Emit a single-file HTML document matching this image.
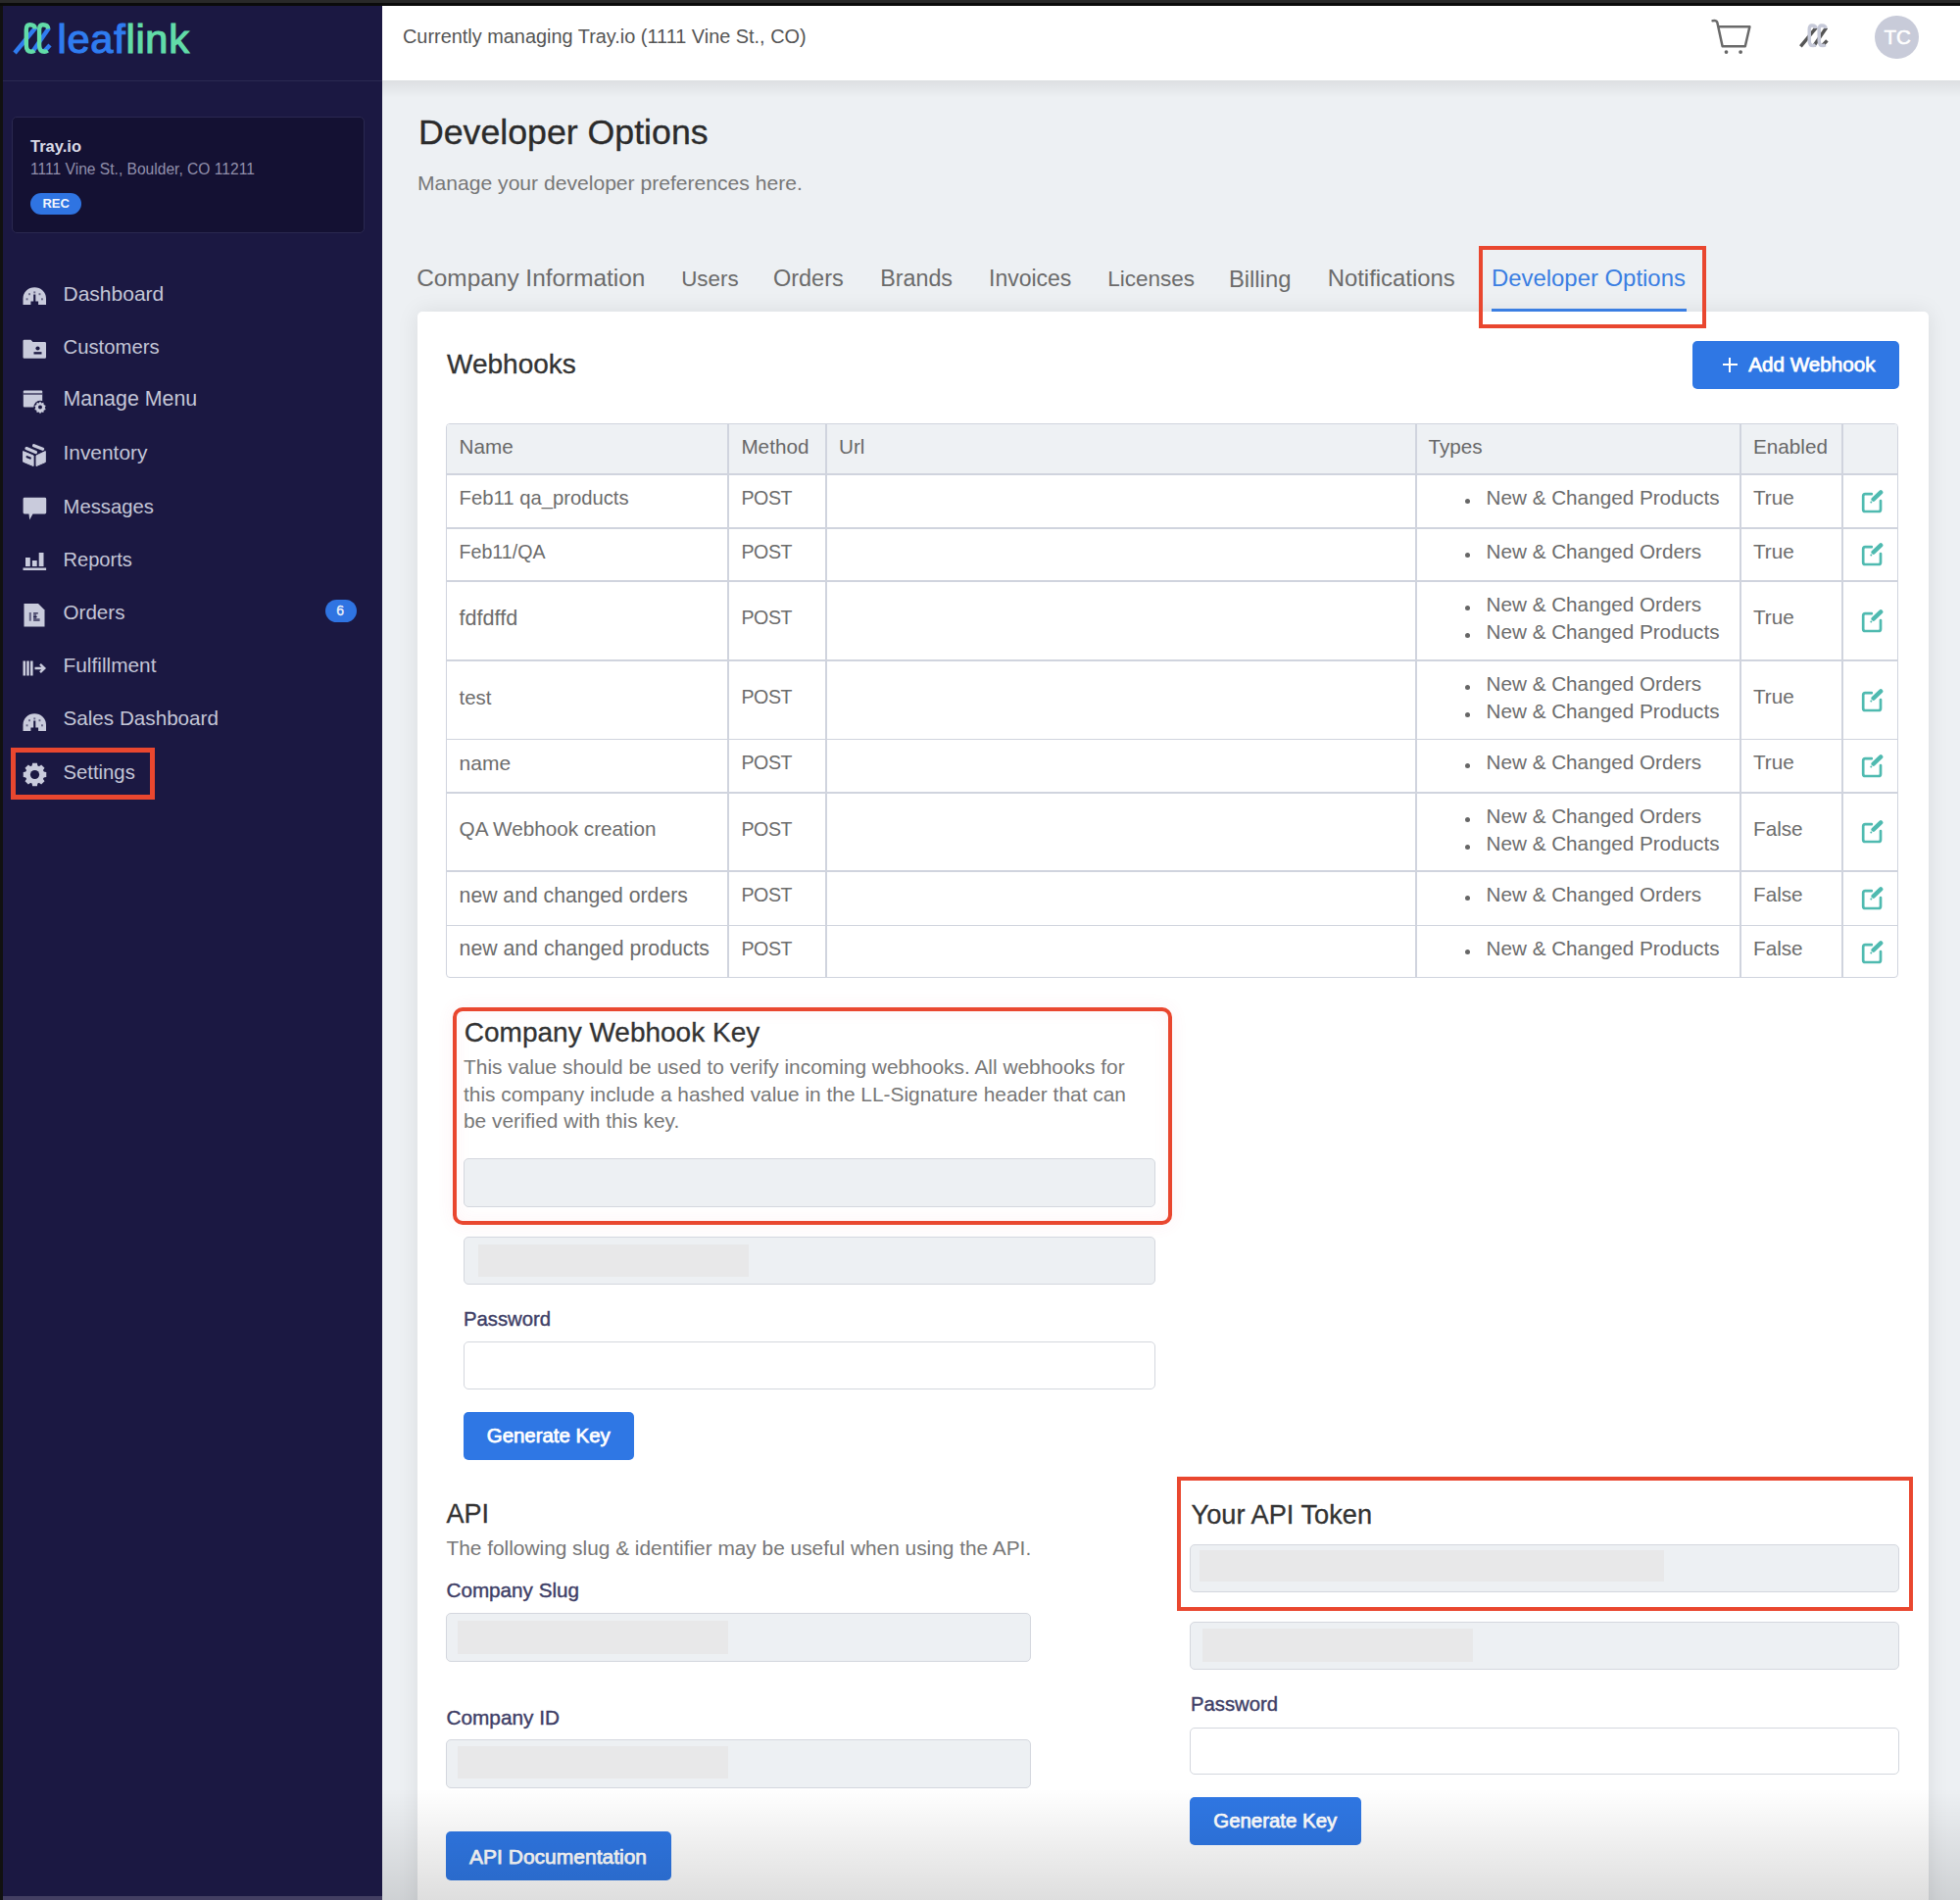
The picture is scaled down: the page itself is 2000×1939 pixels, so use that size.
<!DOCTYPE html>
<html><head><meta charset="utf-8"><style>
html,body{margin:0;padding:0}
body{width:2000px;height:1939px;position:relative;overflow:hidden;background:#edf0f3;font-family:"Liberation Sans", sans-serif}
.t{position:absolute;white-space:pre}
</style></head><body>
<div style="position:absolute;left:0px;top:0px;width:2000px;height:3px;background:#292929"></div>
<div style="position:absolute;left:0px;top:3px;width:2000px;height:3px;background:#0b0b0b"></div>
<div style="position:absolute;left:0px;top:6px;width:3px;height:1933px;background:#111"></div>
<div style="position:absolute;left:3px;top:6px;width:387px;height:1933px;background:#1b1842"></div>
<div style="position:absolute;left:3px;top:82px;width:387px;height:1px;background:#2b2952"></div>
<svg style="position:absolute;left:0;top:0" width="60" height="70" viewBox="0 0 60 70">
<g fill="none" stroke-width="4.4" stroke-linecap="butt">
<path d="M15 54 L36.5 28" stroke="#2f7cf0"/>
<path d="M33 53 L50 28.5" stroke="#2f7cf0"/>
<path d="M44.5 53 L51 46" stroke="#2f7cf0"/>
<path d="M36 29.5 C35.5 25.5 32.5 25.3 30.5 25.3 C28 25.3 26.8 27 26.8 30.5 L26.8 46 C26.8 51 29 52.8 32 52.8 C33.5 52.8 34.5 52.3 35.3 51.6" stroke="#62dca8"/>
<path d="M49.3 29.5 C48.8 25.5 45.8 25.3 43.8 25.3 C41.3 25.3 40.1 27 40.1 30.5 L40.1 46 C40.1 51 42.3 52.8 45.3 52.8 C46.8 52.8 47.8 52.3 48.6 51.6" stroke="#62dca8"/>
</g></svg>
<div class="t" style="left:58.50px;top:19.37px;font-size:41.5px;line-height:41.5px;color:#666;font-weight:400;letter-spacing:0.75px"><span style="color:#2f7cf0;-webkit-text-stroke:1.2px #2f7cf0">leaf</span><span style="color:#62dca8;-webkit-text-stroke:1.2px #62dca8">link</span></div>
<div style="position:absolute;left:12px;top:119px;width:360px;height:119px;background:#141133;border:1px solid #2a2850;border-radius:5px;box-sizing:border-box"></div>
<div class="t" style="left:31.00px;top:141.03px;font-size:16.5px;line-height:16.5px;color:#dadae6;font-weight:700;">Tray.io</div>
<div class="t" style="left:31.00px;top:165.29px;font-size:15.6px;line-height:15.6px;color:#918fab;font-weight:400;">1111 Vine St., Boulder, CO 11211</div>
<div style="position:absolute;left:31px;top:196.5px;width:52px;height:22.5px;background:#2f74e2;border-radius:12px"></div>
<div class="t" style="left:43.40px;top:200.70px;font-size:13px;line-height:13px;color:#f4f6fc;font-weight:700;">REC</div>
<div class="t" style="left:64.50px;top:288.92px;font-size:21.0px;line-height:21.0px;color:#c4c6d7;font-weight:400;">Dashboard</div>
<div class="t" style="left:64.50px;top:343.77px;font-size:20.3px;line-height:20.3px;color:#c4c6d7;font-weight:400;">Customers</div>
<div class="t" style="left:64.50px;top:397.08px;font-size:21.4px;line-height:21.4px;color:#c4c6d7;font-weight:400;">Manage Menu</div>
<div class="t" style="left:64.50px;top:451.76px;font-size:20.9px;line-height:20.9px;color:#c4c6d7;font-weight:400;">Inventory</div>
<div class="t" style="left:64.50px;top:506.52px;font-size:20.3px;line-height:20.3px;color:#c4c6d7;font-weight:400;">Messages</div>
<div class="t" style="left:64.50px;top:560.94px;font-size:20.1px;line-height:20.1px;color:#c4c6d7;font-weight:400;">Reports</div>
<div class="t" style="left:64.50px;top:614.76px;font-size:20.6px;line-height:20.6px;color:#c4c6d7;font-weight:400;">Orders</div>
<div class="t" style="left:64.50px;top:668.80px;font-size:20.85px;line-height:20.85px;color:#c4c6d7;font-weight:400;">Fulfillment</div>
<div class="t" style="left:64.50px;top:723.21px;font-size:20.66px;line-height:20.66px;color:#c4c6d7;font-weight:400;">Sales Dashboard</div>
<div class="t" style="left:64.50px;top:777.77px;font-size:20.3px;line-height:20.3px;color:#c4c6d7;font-weight:400;">Settings</div>
<div style="position:absolute;left:331.6px;top:611.8px;width:32.099999999999966px;height:23.5px;background:#2f74e2;border-radius:12px"></div>
<div class="t" style="left:343.20px;top:616.15px;font-size:14px;line-height:14px;color:#eef2fb;font-weight:400;-webkit-text-stroke:0.3px #eef2fb">6</div>
<div style="position:absolute;left:11px;top:762.5px;width:147px;height:53.5px;border:5px solid #e9472f;box-sizing:border-box"></div>
<svg style="position:absolute;left:23px;top:292px" width="25" height="20" viewBox="0 0 25 20"><path d="M0.5 19 V12.6 A11.75 11.3 0 0 1 24 12.6 V19 Z" fill="#c9cbdc"/>
<path d="M8.4 19.2 V15.6 H11.2 V8.6 H13.3 V15.6 H16.1 V19.2 Z" fill="#1b1842"/>
<g fill="#1b1842" opacity="0.55"><rect x="11.3" y="5.4" width="1.9" height="2"/><rect x="6.1" y="7.2" width="1.9" height="2"/><rect x="16.5" y="7.2" width="1.9" height="2"/><rect x="3.6" y="12.3" width="1.9" height="2"/><rect x="19" y="12.3" width="1.9" height="2"/></g></svg>
<svg style="position:absolute;left:23px;top:726.5px" width="25" height="20" viewBox="0 0 25 20"><path d="M0.5 19 V12.6 A11.75 11.3 0 0 1 24 12.6 V19 Z" fill="#c9cbdc"/>
<path d="M8.4 19.2 V15.6 H11.2 V8.6 H13.3 V15.6 H16.1 V19.2 Z" fill="#1b1842"/>
<g fill="#1b1842" opacity="0.55"><rect x="11.3" y="5.4" width="1.9" height="2"/><rect x="6.1" y="7.2" width="1.9" height="2"/><rect x="16.5" y="7.2" width="1.9" height="2"/><rect x="3.6" y="12.3" width="1.9" height="2"/><rect x="19" y="12.3" width="1.9" height="2"/></g></svg>
<svg style="position:absolute;left:23px;top:345px" width="25" height="22" viewBox="0 0 25 22"><path d="M0.5 3 Q0.5 1.8 1.7 1.8 H8.5 L10.5 4 H22.8 Q24 4 24 5.2 V19.6 Q24 20.8 22.8 20.8 H1.7 Q0.5 20.8 0.5 19.6 Z" fill="#c9cbdc"/>
<circle cx="15.5" cy="10.5" r="2.1" fill="#1b1842"/><rect x="11.5" y="14.2" width="8" height="2.3" fill="#1b1842"/></svg>
<svg style="position:absolute;left:23px;top:397px" width="26" height="26" viewBox="0 0 26 26"><rect x="0.8" y="1.6" width="19.4" height="17" rx="1" fill="#c9cbdc"/>
<rect x="0.8" y="4.4" width="19.4" height="1.2" fill="#1b1842"/>
<circle cx="18" cy="18.3" r="6.6" fill="#1b1842"/>
<path transform="translate(-1,-1.2)" d="M19 13.8 l1.3 1.8 2.1-.6 .3 2.2 2 .9 -1 2 1 2 -2 .9 -.3 2.2 -2.1-.6 -1.3 1.8 -1.3-1.8 -2.1.6 -.3-2.2 -2-.9 1-2 -1-2 2-.9 .3-2.2 2.1.6 Z" fill="#c9cbdc"/>
<circle cx="18" cy="18.5" r="2" fill="#1b1842"/></svg>
<svg style="position:absolute;left:18px;top:445px" width="34" height="35" viewBox="0 0 34 35"><path d="M5.6 15.6 L16.1 20 V30.6 L5.6 26.2 Z" fill="#c9cbdc" stroke="#c9cbdc" stroke-width="1" stroke-linejoin="round"/>
<path d="M19 20 L28.3 15.6 V26.6 L19 30.6 Z" fill="#c9cbdc" stroke="#c9cbdc" stroke-width="1" stroke-linejoin="round"/>
<path d="M9 12.6 L18.4 16.6 M16.6 9.8 L25.6 13.2" stroke="#c9cbdc" stroke-width="3.3" stroke-linecap="round" fill="none"/>
<path d="M9.6 21.2 L12.8 22.6" stroke="#1b1842" stroke-width="2.2" stroke-linecap="round" fill="none"/></svg>
<svg style="position:absolute;left:23px;top:507px" width="26" height="25" viewBox="0 0 26 25"><path d="M2 0.8 H22.8 Q24.2 0.8 24.2 2.2 V16 Q24.2 17.4 22.8 17.4 H10.5 L7.2 23.5 L6.5 17.4 H2 Q0.6 17.4 0.6 16 V2.2 Q0.6 0.8 2 0.8 Z" fill="#c9cbdc"/></svg>
<svg style="position:absolute;left:23px;top:563px" width="26" height="20" viewBox="0 0 26 20"><rect x="3" y="6" width="4.8" height="9" fill="#c9cbdc"/><rect x="9.9" y="9" width="4.8" height="6" fill="#c9cbdc"/><rect x="16.7" y="1" width="4.8" height="14" fill="#c9cbdc"/><rect x="0.5" y="16.5" width="23.6" height="2.5" fill="#c9cbdc"/></svg>
<svg style="position:absolute;left:23px;top:615px" width="25" height="26" viewBox="0 0 25 26"><path d="M1.5 1 H16 L22.5 7.5 V24.5 H1.5 Z" fill="#c9cbdc"/>
<rect x="6.8" y="10" width="2" height="8.7" fill="#1b1842" opacity="0.6"/><rect x="11.1" y="10" width="4.7" height="1.6" fill="#1b1842" opacity="0.75"/><rect x="11.1" y="11.6" width="3" height="5" fill="#1b1842" opacity="0.6"/><rect x="11.1" y="13.9" width="3.6" height="1.2" fill="#1b1842" opacity="0.9"/><rect x="11.1" y="16.2" width="6.5" height="2.8" fill="#1b1842" opacity="0.65"/></svg>
<svg style="position:absolute;left:23px;top:674px" width="26" height="17" viewBox="0 0 26 17"><rect x="0.5" y="0.5" width="2.6" height="15" fill="#c9cbdc"/><rect x="4.2" y="0.5" width="2.6" height="15" fill="#c9cbdc"/><rect x="8" y="0.5" width="2.6" height="15" fill="#c9cbdc"/>
<path d="M12.5 8 H22 M18 3.8 L22.3 8 L18 12.2" stroke="#c9cbdc" stroke-width="2.4" fill="none"/></svg>
<svg style="position:absolute;left:22px;top:777px" width="27" height="27" viewBox="0 0 27 27"><path d="M10.57 4.67 L11.12 1.74 L15.88 1.74 L16.43 4.67 L17.67 5.19 L20.13 3.50 L23.50 6.87 L21.81 9.33 L22.33 10.57 L25.26 11.12 L25.26 15.88 L22.33 16.43 L21.81 17.67 L23.50 20.13 L20.13 23.50 L17.67 21.81 L16.43 22.33 L15.88 25.26 L11.12 25.26 L10.57 22.33 L9.33 21.81 L6.87 23.50 L3.50 20.13 L5.19 17.67 L4.67 16.43 L1.74 15.88 L1.74 11.12 L4.67 10.57 L5.19 9.33 L3.50 6.87 L6.87 3.50 L9.33 5.19 Z" fill="#c9cbdc"/>
<circle cx="13.5" cy="13.5" r="9.6" fill="#c9cbdc"/>
<circle cx="13.5" cy="13.5" r="4.6" fill="#1b1842"/></svg>
<div style="position:absolute;left:390px;top:6px;width:1610px;height:76px;background:#fff"></div>
<div style="position:absolute;left:390px;top:82px;width:1610px;height:18px;background:linear-gradient(rgba(0,0,0,0.07),rgba(0,0,0,0))"></div>
<div class="t" style="left:411.00px;top:27.75px;font-size:19.9px;line-height:19.9px;color:#555;font-weight:400;">Currently managing Tray.io (1111 Vine St., CO)</div>
<div style="position:absolute;left:1913px;top:15.5px;width:44.5px;height:44.5px;border-radius:50%;background:#c8cbd9"></div>
<div class="t" style="left:1922.50px;top:27.85px;font-size:20.5px;line-height:20.5px;color:#fff;font-weight:400;-webkit-text-stroke:0.6px #fff">TC</div>
<svg style="position:absolute;left:1740px;top:15px" width="130" height="45" viewBox="1740 15 130 45">
<path d="M1747.6 21.2 Q1751.5 20.5 1752.3 22.8 L1757.6 47.2 H1780.8 L1785.4 27.3 H1753.6" fill="none" stroke="#6a6a6a" stroke-width="2.5" stroke-linejoin="round" stroke-linecap="round"/>
<circle cx="1761.5" cy="53.1" r="1.9" fill="#666"/><circle cx="1776.1" cy="53.1" r="1.9" fill="#666"/>
<g transform="translate(1837,24.2) scale(0.75) translate(-14.5,-23)">
<g fill="none" stroke-width="4.6" stroke-linecap="butt">
<path d="M15 54 L36.5 28" stroke="#555"/>
<path d="M33 53 L50 28.5" stroke="#555"/>
<path d="M44.5 53 L51 46" stroke="#555"/>
<path d="M36 29.5 C35.5 25.5 32.5 25.3 30.5 25.3 C28 25.3 26.8 27 26.8 30.5 L26.8 46 C26.8 51 29 52.8 32 52.8 C33.5 52.8 34.5 52.3 35.3 51.6" stroke="#c6c9d8"/>
<path d="M49.3 29.5 C48.8 25.5 45.8 25.3 43.8 25.3 C41.3 25.3 40.1 27 40.1 30.5 L40.1 46 C40.1 51 42.3 52.8 45.3 52.8 C46.8 52.8 47.8 52.3 48.6 51.6" stroke="#c6c9d8"/>
</g></g>
</svg>
<div class="t" style="left:427.00px;top:118.38px;font-size:35.7px;line-height:35.7px;color:#2b2b2b;font-weight:400;-webkit-text-stroke:0.35px #2b2b2b">Developer Options</div>
<div class="t" style="left:426.00px;top:176.04px;font-size:21.1px;line-height:21.1px;color:#777;font-weight:400;">Manage your developer preferences here.</div>
<div class="t" style="left:425.20px;top:272.05px;font-size:24.4px;line-height:24.4px;color:#6b6b6b;font-weight:400;">Company Information</div>
<div class="t" style="left:695.20px;top:273.74px;font-size:22.4px;line-height:22.4px;color:#6b6b6b;font-weight:400;">Users</div>
<div class="t" style="left:788.90px;top:272.81px;font-size:23.5px;line-height:23.5px;color:#6b6b6b;font-weight:400;">Orders</div>
<div class="t" style="left:898.20px;top:272.98px;font-size:23.3px;line-height:23.3px;color:#6b6b6b;font-weight:400;">Brands</div>
<div class="t" style="left:1009.00px;top:273.23px;font-size:23.0px;line-height:23.0px;color:#6b6b6b;font-weight:400;">Invoices</div>
<div class="t" style="left:1130.20px;top:273.65px;font-size:22.5px;line-height:22.5px;color:#6b6b6b;font-weight:400;">Licenses</div>
<div class="t" style="left:1253.90px;top:272.55px;font-size:23.8px;line-height:23.8px;color:#6b6b6b;font-weight:400;">Billing</div>
<div class="t" style="left:1354.70px;top:272.47px;font-size:23.9px;line-height:23.9px;color:#6b6b6b;font-weight:400;">Notifications</div>
<div style="position:absolute;left:425.5px;top:317.8px;width:1542.3px;height:1700px;background:#fff;border-radius:5px;box-shadow:0 0 22px rgba(0,0,0,0.085)"></div>
<div class="t" style="left:1522.00px;top:272.47px;font-size:23.9px;line-height:23.9px;color:#3a7ee2;font-weight:400;">Developer Options</div>
<div style="position:absolute;left:1522px;top:315px;width:199px;height:3px;background:#3a7ee2"></div>
<div style="position:absolute;left:1509px;top:251px;width:232px;height:84px;border:4px solid #e9472f;box-sizing:border-box"></div>
<div class="t" style="left:456.00px;top:358.30px;font-size:28px;line-height:28px;color:#333;font-weight:400;-webkit-text-stroke:0.3px #333">Webhooks</div>
<div style="position:absolute;left:1727px;top:347.5px;width:211px;height:49.5px;background:#2f77e4;border-radius:5px"></div>
<div style="position:absolute;left:1757.7px;top:371.2px;width:15.0px;height:2.3000000000000114px;background:#fff"></div>
<div style="position:absolute;left:1764px;top:364.5px;width:2.2999999999999545px;height:15.5px;background:#fff"></div>
<div class="t" style="left:1784.20px;top:361.50px;font-size:20.67px;line-height:20.67px;color:#fff;font-weight:400;-webkit-text-stroke:0.75px #fff">Add Webhook</div>
<div style="position:absolute;left:455px;top:432px;width:1482px;height:566px;border:1.6px solid #d0d4de;border-radius:4px;box-sizing:border-box;overflow:hidden"><div style="position:absolute;left:0;top:0;right:0;height:52px;background:#eef1f4"></div></div>
<div style="position:absolute;left:742.4px;top:432px;width:1.2000000000000455px;height:566px;background:#d0d4de"></div>
<div style="position:absolute;left:842.4px;top:432px;width:1.2000000000000455px;height:566px;background:#d0d4de"></div>
<div style="position:absolute;left:1444.4px;top:432px;width:1.199999999999818px;height:566px;background:#d0d4de"></div>
<div style="position:absolute;left:1775.4px;top:432px;width:1.199999999999818px;height:566px;background:#d0d4de"></div>
<div style="position:absolute;left:1879.4px;top:432px;width:1.199999999999818px;height:566px;background:#d0d4de"></div>
<div style="position:absolute;left:455px;top:483.4px;width:1482px;height:1.2000000000000455px;background:#d0d4de"></div>
<div style="position:absolute;left:455px;top:538.4px;width:1482px;height:1.2000000000000455px;background:#d0d4de"></div>
<div style="position:absolute;left:455px;top:592.4px;width:1482px;height:1.2000000000000455px;background:#d0d4de"></div>
<div style="position:absolute;left:455px;top:673.4px;width:1482px;height:1.2000000000000455px;background:#d0d4de"></div>
<div style="position:absolute;left:455px;top:753.9px;width:1482px;height:1.2000000000000455px;background:#d0d4de"></div>
<div style="position:absolute;left:455px;top:808.4px;width:1482px;height:1.2000000000000455px;background:#d0d4de"></div>
<div style="position:absolute;left:455px;top:888.4px;width:1482px;height:1.2000000000000455px;background:#d0d4de"></div>
<div style="position:absolute;left:455px;top:943.9px;width:1482px;height:1.2000000000000455px;background:#d0d4de"></div>
<div class="t" style="left:468.60px;top:446.38px;font-size:20.7px;line-height:20.7px;color:#686868;font-weight:400;">Name</div>
<div class="t" style="left:756.40px;top:446.38px;font-size:20.7px;line-height:20.7px;color:#686868;font-weight:400;">Method</div>
<div class="t" style="left:856.00px;top:446.38px;font-size:20.7px;line-height:20.7px;color:#686868;font-weight:400;">Url</div>
<div class="t" style="left:1457.50px;top:446.38px;font-size:20.7px;line-height:20.7px;color:#686868;font-weight:400;">Types</div>
<div class="t" style="left:1789.00px;top:446.38px;font-size:20.7px;line-height:20.7px;color:#686868;font-weight:400;">Enabled</div>
<div class="t" style="left:468.60px;top:498.36px;font-size:20.25px;line-height:20.25px;color:#6c6c6c;font-weight:400;">Feb11 qa_products</div>
<div class="t" style="left:756.40px;top:498.91px;font-size:19.6px;line-height:19.6px;color:#6c6c6c;font-weight:400;letter-spacing:-0.4px">POST</div>
<div class="t" style="left:1789.00px;top:497.98px;font-size:20.7px;line-height:20.7px;color:#6c6c6c;font-weight:400;">True</div>
<div style="position:absolute;left:1495.2px;top:508.8px;width:5.1px;height:5.1px;border-radius:50%;background:#666"></div>
<div class="t" style="left:1516.50px;top:497.98px;font-size:20.7px;line-height:20.7px;color:#6c6c6c;font-weight:400;">New &amp; Changed Products</div>
<svg style="position:absolute;left:1897.0px;top:499.8px" width="26" height="26" viewBox="-2 -2 26 26">
<path d="M10.8 2.2 H4.2 Q2.2 2.2 2.2 4.2 V18 Q2.2 20 4.2 20 H18 Q20 20 20 18 V9" fill="none" stroke="#4fbab0" stroke-width="2.7" stroke-linecap="round"/>
<path d="M12.6 7.6 L20.2 0.4" fill="none" stroke="#4fbab0" stroke-width="4.4" stroke-linecap="round"/>
<circle cx="10.3" cy="10.6" r="1" fill="#4fbab0"/>
</svg>
<div class="t" style="left:468.60px;top:553.91px;font-size:19.6px;line-height:19.6px;color:#6c6c6c;font-weight:400;">Feb11/QA</div>
<div class="t" style="left:756.40px;top:553.91px;font-size:19.6px;line-height:19.6px;color:#6c6c6c;font-weight:400;letter-spacing:-0.4px">POST</div>
<div class="t" style="left:1789.00px;top:552.98px;font-size:20.7px;line-height:20.7px;color:#6c6c6c;font-weight:400;">True</div>
<div style="position:absolute;left:1495.2px;top:563.8px;width:5.1px;height:5.1px;border-radius:50%;background:#666"></div>
<div class="t" style="left:1516.50px;top:552.98px;font-size:20.7px;line-height:20.7px;color:#6c6c6c;font-weight:400;">New &amp; Changed Orders</div>
<svg style="position:absolute;left:1897.0px;top:554.3px" width="26" height="26" viewBox="-2 -2 26 26">
<path d="M10.8 2.2 H4.2 Q2.2 2.2 2.2 4.2 V18 Q2.2 20 4.2 20 H18 Q20 20 20 18 V9" fill="none" stroke="#4fbab0" stroke-width="2.7" stroke-linecap="round"/>
<path d="M12.6 7.6 L20.2 0.4" fill="none" stroke="#4fbab0" stroke-width="4.4" stroke-linecap="round"/>
<circle cx="10.3" cy="10.6" r="1" fill="#4fbab0"/>
</svg>
<div class="t" style="left:468.60px;top:619.52px;font-size:21.6px;line-height:21.6px;color:#6c6c6c;font-weight:400;">fdfdffd</div>
<div class="t" style="left:756.40px;top:621.21px;font-size:19.6px;line-height:19.6px;color:#6c6c6c;font-weight:400;letter-spacing:-0.4px">POST</div>
<div class="t" style="left:1789.00px;top:620.28px;font-size:20.7px;line-height:20.7px;color:#6c6c6c;font-weight:400;">True</div>
<div style="position:absolute;left:1495.2px;top:617.6px;width:5.1px;height:5.1px;border-radius:50%;background:#666"></div>
<div class="t" style="left:1516.50px;top:606.88px;font-size:20.7px;line-height:20.7px;color:#6c6c6c;font-weight:400;">New &amp; Changed Orders</div>
<div style="position:absolute;left:1495.2px;top:645.8px;width:5.1px;height:5.1px;border-radius:50%;background:#666"></div>
<div class="t" style="left:1516.50px;top:634.98px;font-size:20.7px;line-height:20.7px;color:#6c6c6c;font-weight:400;">New &amp; Changed Products</div>
<svg style="position:absolute;left:1897.0px;top:621.8px" width="26" height="26" viewBox="-2 -2 26 26">
<path d="M10.8 2.2 H4.2 Q2.2 2.2 2.2 4.2 V18 Q2.2 20 4.2 20 H18 Q20 20 20 18 V9" fill="none" stroke="#4fbab0" stroke-width="2.7" stroke-linecap="round"/>
<path d="M12.6 7.6 L20.2 0.4" fill="none" stroke="#4fbab0" stroke-width="4.4" stroke-linecap="round"/>
<circle cx="10.3" cy="10.6" r="1" fill="#4fbab0"/>
</svg>
<div class="t" style="left:468.60px;top:701.53px;font-size:20.4px;line-height:20.4px;color:#6c6c6c;font-weight:400;">test</div>
<div class="t" style="left:756.40px;top:702.21px;font-size:19.6px;line-height:19.6px;color:#6c6c6c;font-weight:400;letter-spacing:-0.4px">POST</div>
<div class="t" style="left:1789.00px;top:701.28px;font-size:20.7px;line-height:20.7px;color:#6c6c6c;font-weight:400;">True</div>
<div style="position:absolute;left:1495.2px;top:698.6px;width:5.1px;height:5.1px;border-radius:50%;background:#666"></div>
<div class="t" style="left:1516.50px;top:687.88px;font-size:20.7px;line-height:20.7px;color:#6c6c6c;font-weight:400;">New &amp; Changed Orders</div>
<div style="position:absolute;left:1495.2px;top:726.8px;width:5.1px;height:5.1px;border-radius:50%;background:#666"></div>
<div class="t" style="left:1516.50px;top:715.98px;font-size:20.7px;line-height:20.7px;color:#6c6c6c;font-weight:400;">New &amp; Changed Products</div>
<svg style="position:absolute;left:1897.0px;top:702.5px" width="26" height="26" viewBox="-2 -2 26 26">
<path d="M10.8 2.2 H4.2 Q2.2 2.2 2.2 4.2 V18 Q2.2 20 4.2 20 H18 Q20 20 20 18 V9" fill="none" stroke="#4fbab0" stroke-width="2.7" stroke-linecap="round"/>
<path d="M12.6 7.6 L20.2 0.4" fill="none" stroke="#4fbab0" stroke-width="4.4" stroke-linecap="round"/>
<circle cx="10.3" cy="10.6" r="1" fill="#4fbab0"/>
</svg>
<div class="t" style="left:468.60px;top:768.22px;font-size:21.0px;line-height:21.0px;color:#6c6c6c;font-weight:400;">name</div>
<div class="t" style="left:756.40px;top:769.41px;font-size:19.6px;line-height:19.6px;color:#6c6c6c;font-weight:400;letter-spacing:-0.4px">POST</div>
<div class="t" style="left:1789.00px;top:768.48px;font-size:20.7px;line-height:20.7px;color:#6c6c6c;font-weight:400;">True</div>
<div style="position:absolute;left:1495.2px;top:779.2px;width:5.1px;height:5.1px;border-radius:50%;background:#666"></div>
<div class="t" style="left:1516.50px;top:768.48px;font-size:20.7px;line-height:20.7px;color:#6c6c6c;font-weight:400;">New &amp; Changed Orders</div>
<svg style="position:absolute;left:1897.0px;top:770.0px" width="26" height="26" viewBox="-2 -2 26 26">
<path d="M10.8 2.2 H4.2 Q2.2 2.2 2.2 4.2 V18 Q2.2 20 4.2 20 H18 Q20 20 20 18 V9" fill="none" stroke="#4fbab0" stroke-width="2.7" stroke-linecap="round"/>
<path d="M12.6 7.6 L20.2 0.4" fill="none" stroke="#4fbab0" stroke-width="4.4" stroke-linecap="round"/>
<circle cx="10.3" cy="10.6" r="1" fill="#4fbab0"/>
</svg>
<div class="t" style="left:468.60px;top:836.28px;font-size:20.7px;line-height:20.7px;color:#6c6c6c;font-weight:400;">QA Webhook creation</div>
<div class="t" style="left:756.40px;top:837.21px;font-size:19.6px;line-height:19.6px;color:#6c6c6c;font-weight:400;letter-spacing:-0.4px">POST</div>
<div class="t" style="left:1789.00px;top:836.28px;font-size:20.7px;line-height:20.7px;color:#6c6c6c;font-weight:400;">False</div>
<div style="position:absolute;left:1495.2px;top:833.6px;width:5.1px;height:5.1px;border-radius:50%;background:#666"></div>
<div class="t" style="left:1516.50px;top:822.88px;font-size:20.7px;line-height:20.7px;color:#6c6c6c;font-weight:400;">New &amp; Changed Orders</div>
<div style="position:absolute;left:1495.2px;top:861.8px;width:5.1px;height:5.1px;border-radius:50%;background:#666"></div>
<div class="t" style="left:1516.50px;top:850.98px;font-size:20.7px;line-height:20.7px;color:#6c6c6c;font-weight:400;">New &amp; Changed Products</div>
<svg style="position:absolute;left:1897.0px;top:837.3px" width="26" height="26" viewBox="-2 -2 26 26">
<path d="M10.8 2.2 H4.2 Q2.2 2.2 2.2 4.2 V18 Q2.2 20 4.2 20 H18 Q20 20 20 18 V9" fill="none" stroke="#4fbab0" stroke-width="2.7" stroke-linecap="round"/>
<path d="M12.6 7.6 L20.2 0.4" fill="none" stroke="#4fbab0" stroke-width="4.4" stroke-linecap="round"/>
<circle cx="10.3" cy="10.6" r="1" fill="#4fbab0"/>
</svg>
<div class="t" style="left:468.60px;top:902.55px;font-size:21.2px;line-height:21.2px;color:#6c6c6c;font-weight:400;">new and changed orders</div>
<div class="t" style="left:756.40px;top:903.91px;font-size:19.6px;line-height:19.6px;color:#6c6c6c;font-weight:400;letter-spacing:-0.4px">POST</div>
<div class="t" style="left:1789.00px;top:902.98px;font-size:20.7px;line-height:20.7px;color:#6c6c6c;font-weight:400;">False</div>
<div style="position:absolute;left:1495.2px;top:913.8px;width:5.1px;height:5.1px;border-radius:50%;background:#666"></div>
<div class="t" style="left:1516.50px;top:902.98px;font-size:20.7px;line-height:20.7px;color:#6c6c6c;font-weight:400;">New &amp; Changed Orders</div>
<svg style="position:absolute;left:1897.0px;top:905.0px" width="26" height="26" viewBox="-2 -2 26 26">
<path d="M10.8 2.2 H4.2 Q2.2 2.2 2.2 4.2 V18 Q2.2 20 4.2 20 H18 Q20 20 20 18 V9" fill="none" stroke="#4fbab0" stroke-width="2.7" stroke-linecap="round"/>
<path d="M12.6 7.6 L20.2 0.4" fill="none" stroke="#4fbab0" stroke-width="4.4" stroke-linecap="round"/>
<circle cx="10.3" cy="10.6" r="1" fill="#4fbab0"/>
</svg>
<div class="t" style="left:468.60px;top:957.99px;font-size:21.28px;line-height:21.28px;color:#6c6c6c;font-weight:400;">new and changed products</div>
<div class="t" style="left:756.40px;top:959.41px;font-size:19.6px;line-height:19.6px;color:#6c6c6c;font-weight:400;letter-spacing:-0.4px">POST</div>
<div class="t" style="left:1789.00px;top:958.48px;font-size:20.7px;line-height:20.7px;color:#6c6c6c;font-weight:400;">False</div>
<div style="position:absolute;left:1495.2px;top:969.2px;width:5.1px;height:5.1px;border-radius:50%;background:#666"></div>
<div class="t" style="left:1516.50px;top:958.48px;font-size:20.7px;line-height:20.7px;color:#6c6c6c;font-weight:400;">New &amp; Changed Products</div>
<svg style="position:absolute;left:1897.0px;top:959.5px" width="26" height="26" viewBox="-2 -2 26 26">
<path d="M10.8 2.2 H4.2 Q2.2 2.2 2.2 4.2 V18 Q2.2 20 4.2 20 H18 Q20 20 20 18 V9" fill="none" stroke="#4fbab0" stroke-width="2.7" stroke-linecap="round"/>
<path d="M12.6 7.6 L20.2 0.4" fill="none" stroke="#4fbab0" stroke-width="4.4" stroke-linecap="round"/>
<circle cx="10.3" cy="10.6" r="1" fill="#4fbab0"/>
</svg>
<div style="position:absolute;left:462px;top:1028px;width:734px;height:222px;border:4.7px solid #e9472f;border-radius:10px;box-sizing:border-box;box-shadow:0 0 18px rgba(232,68,100,0.07), inset 0 0 18px rgba(232,68,100,0.05)"></div>
<div class="t" style="left:473.80px;top:1040.00px;font-size:28px;line-height:28px;color:#333;font-weight:400;-webkit-text-stroke:0.3px #333">Company Webhook Key</div>
<div class="t" style="left:473.00px;top:1079.01px;font-size:20.9px;line-height:20.9px;color:#777;font-weight:400;">This value should be used to verify incoming webhooks. All webhooks for</div>
<div class="t" style="left:473.00px;top:1106.71px;font-size:20.9px;line-height:20.9px;color:#777;font-weight:400;">this company include a hashed value in the LL-Signature header that can</div>
<div class="t" style="left:473.00px;top:1134.41px;font-size:20.9px;line-height:20.9px;color:#777;font-weight:400;">be verified with this key.</div>
<div style="position:absolute;left:473px;top:1182.3px;width:706.4000000000001px;height:49.299999999999955px;background:#edf0f3;border:1.5px solid #d4d7de;border-radius:5px;box-sizing:border-box"></div>
<div style="position:absolute;left:473px;top:1261.5px;width:706.4000000000001px;height:49.5px;background:#edf0f3;border:1.5px solid #d4d7de;border-radius:5px;box-sizing:border-box"></div>
<div style="position:absolute;left:487.8px;top:1269.5px;width:276.49999999999994px;height:33.5px;background:#e8e8e9"></div>
<div class="t" style="left:473.00px;top:1335.72px;font-size:20.3px;line-height:20.3px;color:#3e3e66;font-weight:400;-webkit-text-stroke:0.4px #3e3e66">Password</div>
<div style="position:absolute;left:473px;top:1368.8px;width:706.4000000000001px;height:49.40000000000009px;background:#fff;border:1.5px solid #d4d7de;border-radius:5px;box-sizing:border-box"></div>
<div style="position:absolute;left:473px;top:1440.5px;width:174px;height:49.700000000000045px;background:#2f77e4;border-radius:5px"></div>
<div class="t" style="left:496.80px;top:1455.21px;font-size:20.42px;line-height:20.42px;color:#fff;font-weight:400;-webkit-text-stroke:0.75px #fff">Generate Key</div>
<div class="t" style="left:455.50px;top:1531.84px;font-size:27px;line-height:27px;color:#333;font-weight:400;-webkit-text-stroke:0.3px #333">API</div>
<div class="t" style="left:455.50px;top:1570.35px;font-size:20.85px;line-height:20.85px;color:#777;font-weight:400;">The following slug &amp; identifier may be useful when using the API.</div>
<div class="t" style="left:455.50px;top:1612.81px;font-size:20.66px;line-height:20.66px;color:#3e3e66;font-weight:400;-webkit-text-stroke:0.4px #3e3e66">Company Slug</div>
<div style="position:absolute;left:455px;top:1646px;width:597px;height:49.700000000000045px;background:#edf0f3;border:1.5px solid #d4d7de;border-radius:5px;box-sizing:border-box"></div>
<div style="position:absolute;left:467px;top:1653.6px;width:276.4px;height:34.40000000000009px;background:#e8e8e9"></div>
<div class="t" style="left:455.50px;top:1742.81px;font-size:20.78px;line-height:20.78px;color:#3e3e66;font-weight:400;-webkit-text-stroke:0.4px #3e3e66">Company ID</div>
<div style="position:absolute;left:455px;top:1775.3px;width:597px;height:49.700000000000045px;background:#edf0f3;border:1.5px solid #d4d7de;border-radius:5px;box-sizing:border-box"></div>
<div style="position:absolute;left:467px;top:1782px;width:276.4px;height:33px;background:#e8e8e9"></div>
<div style="position:absolute;left:455px;top:1869px;width:229.70000000000005px;height:50px;background:#2f77e4;border-radius:5px"></div>
<div class="t" style="left:479.10px;top:1883.72px;font-size:21.0px;line-height:21.0px;color:#fff;font-weight:400;-webkit-text-stroke:0.75px #fff">API Documentation</div>
<div style="position:absolute;left:1201px;top:1507.4px;width:750.5999999999999px;height:136.29999999999995px;border:4.5px solid #e9472f;box-sizing:border-box"></div>
<div class="t" style="left:1215.60px;top:1532.28px;font-size:27.2px;line-height:27.2px;color:#333;font-weight:400;-webkit-text-stroke:0.3px #333">Your API Token</div>
<div style="position:absolute;left:1214px;top:1575.5px;width:724px;height:49.5px;background:#edf0f3;border:1.5px solid #d4d7de;border-radius:5px;box-sizing:border-box"></div>
<div style="position:absolute;left:1224.3px;top:1581.7px;width:473.70000000000005px;height:32.299999999999955px;background:#e8e8e9"></div>
<div style="position:absolute;left:1214px;top:1655.3px;width:724px;height:48.700000000000045px;background:#edf0f3;border:1.5px solid #d4d7de;border-radius:5px;box-sizing:border-box"></div>
<div style="position:absolute;left:1227px;top:1662px;width:276px;height:33.799999999999955px;background:#e8e8e9"></div>
<div class="t" style="left:1215.00px;top:1728.82px;font-size:20.3px;line-height:20.3px;color:#3e3e66;font-weight:400;-webkit-text-stroke:0.4px #3e3e66">Password</div>
<div style="position:absolute;left:1214px;top:1762.7px;width:724px;height:48.0px;background:#fff;border:1.5px solid #d4d7de;border-radius:5px;box-sizing:border-box"></div>
<div style="position:absolute;left:1214px;top:1833.8px;width:175px;height:49.200000000000045px;background:#2f77e4;border-radius:5px"></div>
<div class="t" style="left:1238.30px;top:1848.41px;font-size:20.42px;line-height:20.42px;color:#fff;font-weight:400;-webkit-text-stroke:0.75px #fff">Generate Key</div>
<div style="position:absolute;left:3px;top:1935px;width:387px;height:4px;background:#433e62"></div>
<div style="position:absolute;left:390px;top:1825px;width:1610px;height:114px;background:linear-gradient(rgba(0,0,0,0),rgba(0,0,0,0.13))"></div>
</body></html>
